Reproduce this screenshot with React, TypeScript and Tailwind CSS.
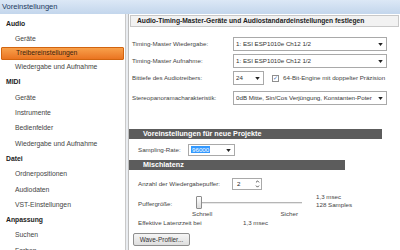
import { ChevronDown } from 'lucide-react'

const font = { fontFamily: '"Liberation Sans", Arial, sans-serif' }

type Item = { label: string; group?: boolean; active?: boolean }

const tree: Item[] = [
  { label: 'Audio', group: true },
  { label: 'Geräte' },
  { label: 'Treibereinstellungen', active: true },
  { label: 'Wiedergabe und Aufnahme' },
  { label: 'MIDI', group: true },
  { label: 'Geräte' },
  { label: 'Instrumente' },
  { label: 'Bedienfelder' },
  { label: 'Wiedergabe und Aufnahme' },
  { label: 'Datei', group: true },
  { label: 'Ordnerpositionen' },
  { label: 'Audiodaten' },
  { label: 'VST-Einstellungen' },
  { label: 'Anpassung', group: true },
  { label: 'Suchen' },
  { label: 'Farben' },
]

function Select({ value, className, highlight }: { value: string; className: string; highlight?: boolean }) {
  return (
    <div className={`flex items-center border border-[#a9a9a9] bg-white pl-[2px] pr-[3px] ${className}`}>
      <span className="flex-1 overflow-hidden whitespace-nowrap text-[6.2px] text-[#333]">
        {highlight ? <span className="bg-[#3399ff] px-[1px] text-white">{value}</span> : value}
      </span>
      <svg width="5" height="3" viewBox="0 0 6 4" className="ml-[2px] shrink-0">
        <path d="M0 0 L6 0 L3 4 Z" fill="#222" />
      </svg>
    </div>
  )
}

function SectionBar({ title, className }: { title: string; className: string }) {
  return (
    <div className={`flex h-[10px] items-center whitespace-nowrap bg-[#5c5c5c] pl-[14px] text-[7.2px] font-bold leading-none text-white ${className}`}>
      {title}
    </div>
  )
}

export default function App() {
  return (
    <div className="flex h-[250px] w-[400px] flex-col overflow-hidden bg-[#e9ecf0] whitespace-nowrap" style={font}>
      <div className="flex h-[14px] shrink-0 items-center bg-gradient-to-b from-[#dce8f6] to-[#c3d6ec] pl-[2px] text-[7.5px] text-[#1d3a5f]">
        Voreinstellungen
      </div>
      <div className="flex min-h-0 flex-1 gap-[2px]">
        <aside className="w-[126px] shrink-0 border-r border-[#c9c9c9] bg-white pt-[2px]">
          {tree.map((item, i) =>
            item.group ? (
              <div key={i} className="flex h-[15.3px] items-center pl-[6px] text-[6.8px] font-bold text-[#222]">
                {item.label}
              </div>
            ) : item.active ? (
              <div
                key={i}
                className="mx-[1px] flex h-[13px] items-center rounded-[1px] border border-[#d2640f] bg-gradient-to-b from-[#f8a04a] to-[#ea7420] pl-[14px] text-[6.8px] text-[#3b2410]"
              >
                {item.label}
              </div>
            ) : (
              <div key={i} className="flex h-[15.3px] items-center pl-[15px] text-[6.8px] text-[#444]">
                {item.label}
              </div>
            ),
          )}
        </aside>
        <main className="min-w-0 flex-1 border-l border-[#bdbdbd] bg-white text-[6.2px] text-[#444]">
          <div className="mx-[1px] mt-[1px] flex h-[12px] items-center border border-[#c8c8c8] bg-[#f2f2f2] pl-[6px] text-[6.7px] font-bold text-[#222]">
            Audio-Timing-Master-Geräte und Audiostandardeinstellungen festlegen
          </div>
          <div className="flex flex-col pl-[3px] pt-[10px]">
            <div className="flex h-[14px] items-center">
              <span className="w-[101px]">Timing-Master Wiedergabe:</span>
              <Select value="1: ESI ESP1010e Ch12 1/2" className="h-[14px] w-[154px]" />
            </div>
            <div className="mt-[3px] flex h-[14px] items-center">
              <span className="w-[101px]">Timing-Master Aufnahme:</span>
              <Select value="1: ESI ESP1010e Ch12 1/2" className="h-[14px] w-[154px]" />
            </div>
            <div className="mt-[3px] flex h-[14px] items-center">
              <span className="w-[101px]">Bittiefe des Audiotreibers:</span>
              <Select value="24" className="h-[14px] w-[31px]" />
              <span className="ml-[8px] mr-[4px] flex h-[7px] w-[7px] items-center justify-center border border-[#8f8f8f] bg-white text-[6px] leading-none text-[#4a6fb5]">
                ✓
              </span>
              <span>64-Bit-Engine mit doppelter Präzision</span>
            </div>
            <div className="mt-[6px] flex h-[14px] items-center">
              <span className="w-[101px]">Stereopanoramacharakteristik:</span>
              <Select value="0dB Mitte, Sin/Cos Verjüngung, Konstanten-Poter" className="h-[14px] w-[154px]" />
            </div>
          </div>
          <SectionBar title="Voreinstellungen für neue Projekte" className="mt-[24px] w-[253px]" />
          <div className="mt-[5px] flex h-[12px] items-center pl-[9px]">
            <span className="w-[50px]">Sampling-Rate:</span>
            <Select value="96000" highlight className="h-[12px] w-[47px]" />
          </div>
          <SectionBar title="Mischlatenz" className="mt-[4px] w-[216px]" />
          <div className="mt-[8px] flex h-[12px] items-center pl-[9px]">
            <span className="w-[94px]">Anzahl der Wiedergabepuffer:</span>
            <div className="flex h-[12px] w-[30px] items-center border border-[#a9a9a9] bg-white pl-[4px]">
              <span className="flex-1 text-[#222]">2</span>
              <div className="flex h-full w-[7px] flex-col items-center justify-center text-[#333]">
                <ChevronDown className="h-[5px] w-[5px] rotate-180" strokeWidth={4} />
                <ChevronDown className="h-[5px] w-[5px]" strokeWidth={4} />
              </div>
            </div>
          </div>
          <div className="mt-[6px] flex items-start pl-[9px]">
            <span className="mt-[3px] w-[58px]">Puffergröße:</span>
            <div className="flex flex-col">
              <div className="relative flex h-[13px] w-[106px] items-center">
                <div className="h-[2px] w-full border-t border-[#b5b5b5] bg-[#e8e8e8]" />
                <div className="absolute left-0 top-0 h-[13px] w-[6px] rounded-[1px] border border-[#8c8c8c] bg-gradient-to-b from-white to-[#dcdcdc]" />
              </div>
              <div className="mt-[2px] flex w-[106px] justify-between pr-[4px] leading-none">
                <span className="-ml-[4px]">Schnell</span>
                <span>Sicher</span>
              </div>
            </div>
            <div className="ml-[14px] mt-[-3px] flex flex-col leading-[8px]">
              <span>1,3 msec</span>
              <span>128 Samples</span>
            </div>
          </div>
          <div className="mt-[1px] flex h-[9px] items-center pl-[9px]">
            <span className="w-[105px]">Effektive Latenzzeit bei</span>
            <span>1,3 msec</span>
          </div>
          <div className="pl-[4px] pt-[6px]">
            <button className="flex h-[13px] w-[57px] items-center justify-center rounded-[2px] border border-[#8e8e8e] bg-gradient-to-b from-[#f5f5f5] to-[#dedede] text-[6.4px] text-[#333]">
              Wave-Profiler...
            </button>
          </div>
        </main>
      </div>
    </div>
  )
}
